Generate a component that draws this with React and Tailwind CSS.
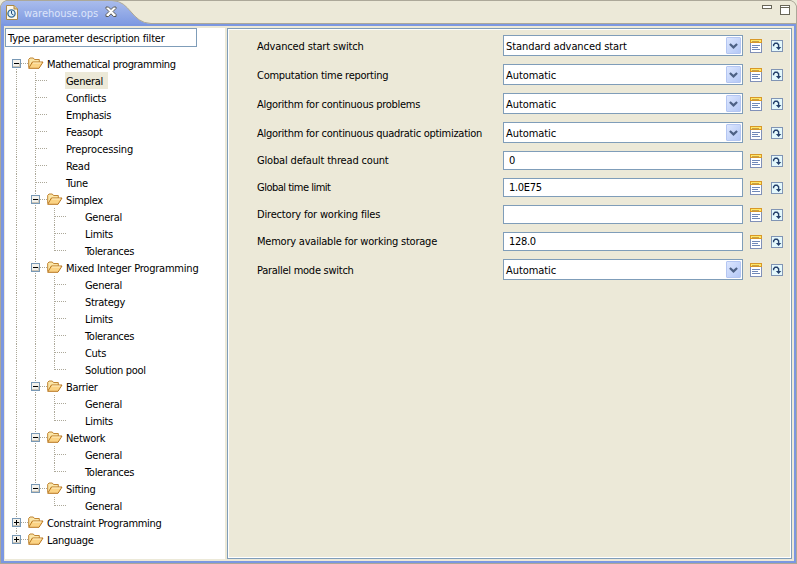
import React from "react";

const TREE = [
  ["Mathematical programming", 0, "open", "tracking-[-0.38px]"],
  ["General", 1, "leaf"],
  ["Conflicts", 1, "leaf"],
  ["Emphasis", 1, "leaf"],
  ["Feasopt", 1, "leaf"],
  ["Preprocessing", 1, "leaf", "tracking-[-0.15px]"],
  ["Read", 1, "leaf"],
  ["Tune", 1, "leaf"],
  ["Simplex", 1, "open", "tracking-[-0.4px]"],
  ["General", 2, "leaf"],
  ["Limits", 2, "leaf"],
  ["Tolerances", 2, "leaf"],
  ["Mixed Integer Programming", 1, "open", "tracking-[-0.21px]"],
  ["General", 2, "leaf"],
  ["Strategy", 2, "leaf"],
  ["Limits", 2, "leaf"],
  ["Tolerances", 2, "leaf"],
  ["Cuts", 2, "leaf"],
  ["Solution pool", 2, "leaf"],
  ["Barrier", 1, "open"],
  ["General", 2, "leaf"],
  ["Limits", 2, "leaf"],
  ["Network", 1, "open"],
  ["General", 2, "leaf"],
  ["Tolerances", 2, "leaf"],
  ["Sifting", 1, "open"],
  ["General", 2, "leaf"],
  ["Constraint Programming", 0, "closed"],
  ["Language", 0, "closed"],
];

const FIELDS = [
  ["Advanced start switch", "Standard advanced start", true, "tracking-[-0.15px]"],
  ["Computation time reporting", "Automatic", true, "tracking-[-0.27px]"],
  ["Algorithm for continuous problems", "Automatic", true, "tracking-[-0.27px]"],
  ["Algorithm for continuous quadratic optimization", "Automatic", true, "tracking-[-0.27px]"],
  ["Global default thread count", "0", false, "tracking-[-0.17px]"],
  ["Global time limit", "1.0E75", false, "tracking-[-0.5px]"],
  ["Directory for working files", "", false, "tracking-[-0.18px]"],
  ["Memory available for working storage", "128.0", false, "tracking-[-0.22px]"],
  ["Parallel mode switch", "Automatic", true, "tracking-[-0.27px]"],
];

// True when a later sibling exists at the given depth under the same parent.
function continues(index, depth) {
  for (let i = index + 1; i < TREE.length; i++) {
    if (TREE[i][1] < depth) return false;
    if (TREE[i][1] === depth) return true;
  }
  return false;
}

function Guide({ up, down, branch, state }) {
  return (
    <svg width={branch ? 21 : 19} height="17" className="shrink-0" shapeRendering="crispEdges" fill="none">
      {up && <path d="M9.5 0V9" stroke="#aca899" strokeDasharray="1 1" />}
      {down && <path d="M9.5 8V17" stroke="#aca899" strokeDasharray="1 1" />}
      {branch && <path d="M10 8.5H21" stroke="#aca899" strokeDasharray="1 1" />}
      {branch && state !== "leaf" && (
        <>
          <rect x="5.5" y="4.5" width="8" height="8" fill="#f4f2ec" stroke="#7898b5" />
          <path d="M6 11.5H13M12.5 8V12" stroke="#cbc5b8" />
          <path d="M7 8.5H12" stroke="#000" />
          {state === "closed" && <path d="M9.5 6V11" stroke="#000" />}
        </>
      )}
    </svg>
  );
}

function Folder() {
  return (
    <svg width="16" height="13" viewBox="0 0 16 13" className="shrink-0">
      <path d="M.7 10.5V2.3L2 1h3.3l1.2 1.5h4.8v2.4" fill="#fbe6a8" stroke="#c08432" />
      <path d="M.7 11.3 4.4 5H15l-4 6.3z" fill="#fbd384" stroke="#b87620" strokeLinejoin="round" />
      <path d="M5 6h8.4" stroke="#fff0c4" />
    </svg>
  );
}

function TreeRow({ item, index }) {
  const [label, depth, state, tracking = ""] = item;
  const selected = index === 1;
  return (
    <div className="flex h-[17px] items-center pl-[2px]">
      {Array.from({ length: depth }, (_, d) => (
        <Guide key={d} up={continues(index, d)} down={continues(index, d)} />
      ))}
      <Guide branch state={state} up={index > 0} down={continues(index, depth)} />
      <span className="w-[18px] shrink-0">{state !== "leaf" && <Folder />}</span>
      <span className={`h-[17px] pl-px pt-px leading-[17px] ${selected ? "bg-[#ece9d8] pr-[5px]" : ""} ${tracking}`}>{label}</span>
    </div>
  );
}

function DocIcon() {
  return (
    <svg width="12" height="14" className="shrink-0" shapeRendering="crispEdges">
      <rect x=".5" y=".5" width="11" height="13" fill="#fff" stroke="#8090b8" />
      <rect x=".5" y=".5" width="11" height="3" fill="#ffe868" stroke="#d89828" />
      <path d="M2 2.5H9" stroke="#c8a048" />
      <path d="M2 6.5H10M2 8.5H8M2 10.5H10" stroke="#7088b8" />
    </svg>
  );
}

function ResetIcon() {
  return (
    <svg width="12" height="12" className="shrink-0">
      <rect x=".5" y=".5" width="11" height="11" fill="#e4f8fc" stroke="#8094b4" />
      <path d="M2.6 6.2V4.8L4 3.2h2.2L7.6 4.8V8" fill="none" stroke="#24406c" strokeWidth="1.4" />
      <path d="M4.9 7H10.3L7.6 9.9z" fill="#24406c" />
    </svg>
  );
}

function Field({ label, value, combo, tracking }) {
  return (
    <div className={combo ? "flex h-[21px] items-center" : "flex h-[19px] items-center"}>
      <span className={`w-[246px] shrink-0 ${combo ? "pt-px" : ""} ${tracking}`}>{label}</span>
      <div className={combo ? "flex h-full w-60 items-center border border-[#7f9db9] bg-white pl-[2px] pr-px" : "flex h-full w-60 items-center border border-[#7f9db9] bg-white pl-[5px]"}>
        <span className={combo ? "flex-1 pt-px tracking-[-0.08px]" : "flex-1"}>{value}</span>
        {combo && (
          <span className="flex h-[17px] w-[15px] items-center justify-center rounded-[1px] border border-[#b4c6f2] bg-linear-to-br from-[#dce6fe] to-[#b4c8f6]">
            <svg width="9" height="6"><path d="M.9 1 4.5 4.4 8.1 1" fill="none" stroke="#4d6185" strokeWidth="2.2" /></svg>
          </span>
        )}
      </div>
      <span className="ml-[7px] flex w-[21px]"><DocIcon /></span>
      <ResetIcon />
    </div>
  );
}

function TabBar() {
  return (
    <div className="relative h-[26px]">
      <svg width="797" height="26" className="absolute inset-0" fill="none">
        <defs>
          <linearGradient id="tab" x1="0" y1="0" x2="0" y2="1">
            <stop offset="0" stopColor="#a9bcec" />
            <stop offset="1" stopColor="#7b97e1" />
          </linearGradient>
        </defs>
        <path d="M0 26V6L1 3 3 1 6 0H791L794 1 796 3 797 6V26z" fill="#ece9d8" />
        <path d="M1 26V6L3 2 6 1H112C131 1 131 23 151 23.5H796V26z" fill="url(#tab)" />
        <path d="M1 24H796V26H1z" fill="#7b97e1" />
        <path d="M.5 26V6L2.5 2.5 6 .5H791L794.5 2.5 796.5 6V26" stroke="#aca899" />
        <path d="M112 .5C131 1 131 23 151 23.5H796" stroke="#aca899" />
      </svg>
      <div className="relative flex h-[26px] items-center pl-[6px]">
        <svg width="12" height="15" className="mb-px shrink-0">
          <path d="M.5.5H8L11.5 4V14.5H.5z" fill="#fff8e8" stroke="#a88848" />
          <path d="M8 .5V4h3.5" fill="#e8c880" stroke="#a88848" />
          <circle cx="5.5" cy="8.5" r="3.6" fill="#e0f2fa" stroke="#306898" strokeWidth="1.3" />
          <path d="M5.5 6V8.7L7.5 10" fill="none" stroke="#204878" />
        </svg>
        <span className="ml-[6px] w-[81px] tracking-[-0.03px] text-[#dce4fa]">warehouse.ops</span>
        <svg width="12" height="12" className="mb-[2px]">
          <path d="M1 1H3.5L6 3.5 8.500 1H11V2.500L8 5.500 11 8.500V10.500H8.500L6 7.800 3.500 10.500H1V8.500L4 5.500 1 2.500z" fill="#fff" stroke="#5c5c58" />
        </svg>
        <svg width="32" height="12" className="ml-auto mr-[7px] mb-[6px]" fill="#fff" stroke="#686658" shapeRendering="crispEdges">
          <rect x="4.5" y="1.5" width="9" height="3" />
          <rect x="22.5" y="1.5" width="9" height="9" />
          <path d="M22 3.500H32" />
        </svg>
      </div>
    </div>
  );
}

export default function App() {
  return (
    <div className="flex h-[564px] w-[797px] flex-col overflow-hidden whitespace-nowrap bg-[#ece9d8] font-['DejaVu_Sans_Condensed','DejaVu_Sans',sans-serif] text-[11px] leading-[15px] tracking-[-0.3px] text-black">
      <TabBar />
      <div className="flex min-h-0 flex-1 border-x border-b border-[#aca899]">
        <div className="flex min-w-0 flex-1 border-x-2 border-b-2 border-l-3 border-[#7b97e1] pb-[2px] pl-px pr-[2px] pt-[2px]">
          <div className="w-[220px] shrink-0 bg-white">
            <div className="mb-2 flex h-[19px] w-[192px] items-center border border-[#7f9db9] pl-[2px] pt-px tracking-[-0.17px]">Type parameter description filter</div>
            {TREE.map((item, i) => <TreeRow key={i} item={item} index={i} />)}
          </div>
          <div className="ml-[2px] flex-1 border border-[#7f9db9]">
            <div className="flex h-full flex-col gap-2 border border-white pl-7 pt-[5px]">
              {FIELDS.map(([label, value, combo, tracking]) => (
                <Field key={label} label={label} value={value} combo={combo} tracking={tracking} />
              ))}
            </div>
          </div>
        </div>
      </div>
    </div>
  );
}
